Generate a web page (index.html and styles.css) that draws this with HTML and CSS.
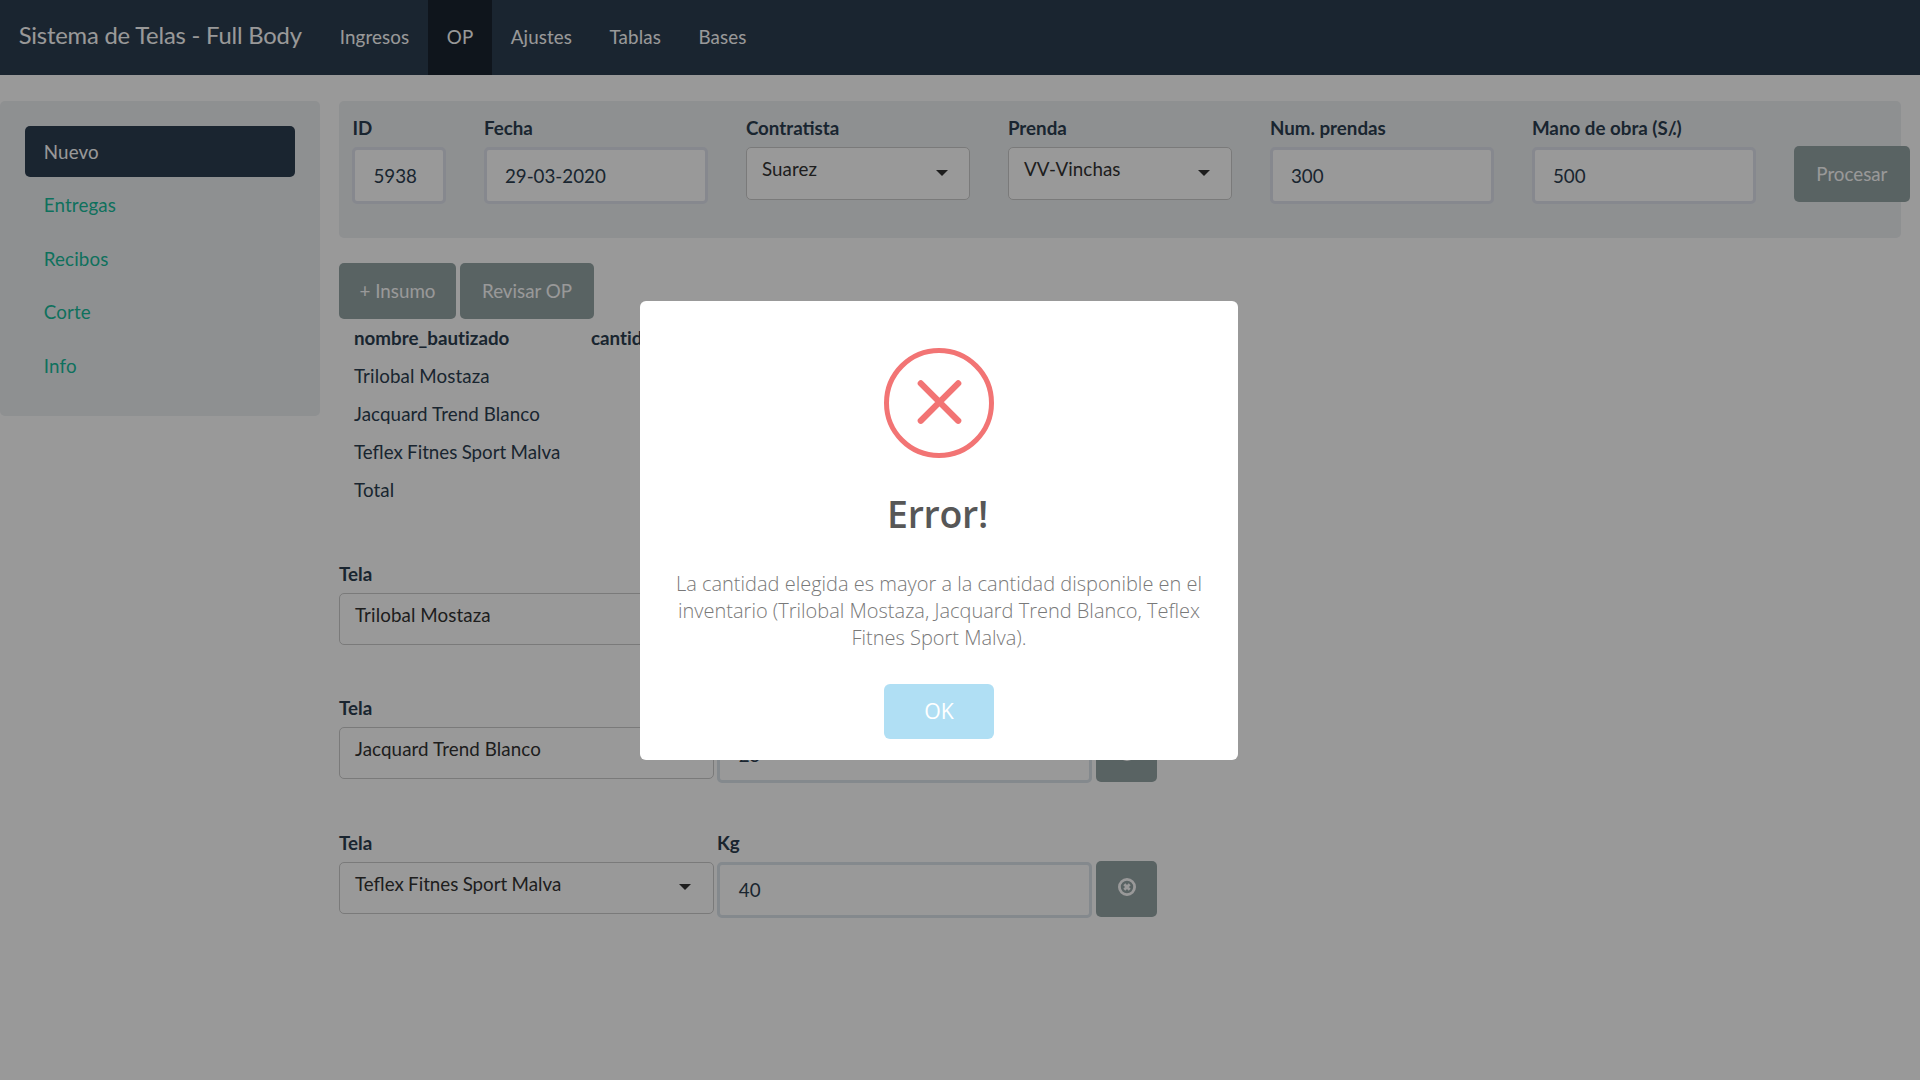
FILE: index.html
```html
<!DOCTYPE html>
<html lang="es">
<head>
<meta charset="utf-8">
<title>Sistema de Telas - Full Body</title>
<link rel="stylesheet" href="styles.css">
</head>
<body>
<header class="navbar">
  <span class="brand">Sistema de Telas - Full Body</span>
  <nav class="nav-links">
    <a>Ingresos</a><a class="active">OP</a><a>Ajustes</a><a>Tablas</a><a>Bases</a>
  </nav>
</header>
<div class="layout">
  <aside class="sidebar">
    <a class="active">Nuevo</a><a>Entregas</a><a>Recibos</a><a>Corte</a><a>Info</a>
  </aside>
  <main class="main">
    <section class="order-form">
      <div class="field"><label>ID</label><div class="input">5938</div></div>
      <div class="field"><label>Fecha</label><div class="input">29-03-2020</div></div>
      <div class="field"><label>Contratista</label><div class="select"><span>Suarez</span><i class="caret"></i></div></div>
      <div class="field"><label>Prenda</label><div class="select"><span>VV-Vinchas</span><i class="caret"></i></div></div>
      <div class="field"><label>Num. prendas</label><div class="input">300</div></div>
      <div class="field"><label>Mano de obra (S<span class="tight">/</span>.)</label><div class="input">500</div></div>
      <button class="btn process">Procesar</button>
    </section>
    <div class="actions"><button class="btn add">+ Insumo</button><button class="btn review">Revisar OP</button></div>
    <table class="summary">
      <thead><tr><th>nombre_bautizado</th><th>cantidad</th></tr></thead>
      <tbody>
        <tr><td>Trilobal Mostaza</td><td></td></tr>
        <tr><td>Jacquard Trend Blanco</td><td></td></tr>
        <tr><td class="snug">Teflex Fitnes Sport Malva</td><td></td></tr>
        <tr><td>Total</td><td></td></tr>
      </tbody>
    </table>
    <section class="fabrics">
      <div class="fabric">
        <div class="field"><label>Tela</label><div class="select"><span>Trilobal Mostaza</span><i class="caret"></i></div></div>
        <div class="field"><label>Kg</label><div class="input"></div></div>
        <button class="btn remove"><svg viewBox="0 0 18 18"><circle cx="9" cy="9" r="7.6"/><path d="M6.3 6.3l5.4 5.4M11.7 6.3l-5.4 5.4"/></svg></button>
      </div>
      <div class="fabric">
        <div class="field"><label>Tela</label><div class="select"><span>Jacquard Trend Blanco</span><i class="caret"></i></div></div>
        <div class="field"><label>Kg</label><div class="input">25</div></div>
        <button class="btn remove"><svg viewBox="0 0 18 18"><circle cx="9" cy="9" r="7.6"/><path d="M6.3 6.3l5.4 5.4M11.7 6.3l-5.4 5.4"/></svg></button>
      </div>
      <div class="fabric">
        <div class="field"><label>Tela</label><div class="select"><span class="snug">Teflex Fitnes Sport Malva</span><i class="caret"></i></div></div>
        <div class="field"><label>Kg</label><div class="input">40</div></div>
        <button class="btn remove"><svg viewBox="0 0 18 18"><circle cx="9" cy="9" r="7.6"/><path d="M6.3 6.3l5.4 5.4M11.7 6.3l-5.4 5.4"/></svg></button>
      </div>
    </section>
  </main>
</div>
<div class="overlay">
  <div class="alert">
    <svg class="alert-icon" viewBox="0 0 110 110"><circle cx="55" cy="55" r="52.5"/><path d="M36.8 35.4l37.4 37.4M74.2 35.4L36.8 72.8"/></svg>
    <h2>Error!</h2>
    <p>La cantidad elegida es mayor a la cantidad disponible en el inventario (Trilobal Mostaza, Jacquard Trend Blanco, Teflex Fitnes Sport Malva).</p>
    <button class="confirm">OK</button>
  </div>
</div>
</body>
</html>
```

FILE: styles.css
```css
* { box-sizing: border-box; }
body {
  margin: 0;
  height: 1080px;
  overflow: hidden;
  background: #fff;
  color: #2c3e50;
  font: 18.75px/26.25px Lato, sans-serif;
}
button { border: 0; font: inherit; }

.navbar { display: flex; height: 75px; background: #2c3e50; color: #fff; }
.brand {
  width: 321px;
  padding: 22px 0 0 18.75px;
  font-size: 23.75px;
  letter-spacing: -0.18px;
  white-space: nowrap;
}
.nav-links { display: flex; letter-spacing: 0.12px; }
.nav-links a { padding: 24.4px 18.75px; }
.nav-links .active { background: #1a242f; }

.layout { display: flex; align-items: flex-start; gap: 19px; padding-top: 26px; }
.sidebar {
  display: flex;
  flex-direction: column;
  gap: 2.6px;
  width: 320px;
  height: 315px;
  padding: 25px;
  border-radius: 5px;
  background: #edf0f2;
  letter-spacing: 0.15px;
}
.sidebar a { height: 51px; padding: 12.5px 18.75px; border-radius: 5px; color: #18bc9c; }
.sidebar .active { background: #2c3e50; color: #fff; }

.main { width: 1562px; }
.order-form {
  display: grid;
  grid-template-columns: 94px repeat(5, 224.5px) 116px;
  column-gap: 37.5px;
  align-items: start;
  height: 137px;
  padding: 13px 0 0 13.4px;
  border-radius: 5px;
  background: #edf0f2;
}
label { display: block; height: 33px; padding-top: 1px; font-weight: 700; white-space: nowrap; }
.tight { letter-spacing: -4.4px; }
.input {
  height: 57px;
  padding: 13px 18px;
  border: 3px solid #dce4ec;
  border-radius: 5px;
  background: #fff;
}
.order-form .input { border-color: #dfe3ed; }
.select {
  display: flex;
  justify-content: space-between;
  height: 52.5px;
  padding: 8px 21px 0 15px;
  border: 1px solid #ccc;
  border-radius: 5px;
  background: #fff;
  color: #333;
  letter-spacing: 0.1px;
}
.caret {
  width: 0;
  height: 0;
  margin-top: 13.5px;
  border: 6.25px solid transparent;
  border-top-color: #333;
  border-bottom: 0;
}
.btn {
  height: 56px;
  padding: 0;
  border-radius: 5px;
  background: #95a5a6;
  color: #fff;
}
.process { width: 116px; margin-top: 32px; }
.actions { display: flex; gap: 4px; margin-top: 25px; }
.add { width: 117px; }
.review { width: 134px; }

.summary { border-collapse: collapse; letter-spacing: 0.1px; }
.summary th, .summary td { height: 38px; padding: 0 15px; text-align: left; white-space: nowrap; }
.summary th { letter-spacing: 0.01px; }
.summary th:first-child { width: 237px; }
.summary .snug, .select .snug { letter-spacing: 0; word-spacing: -0.5px; }

.fabrics { display: grid; gap: 44.4px; margin-top: 51px; }
.fabric { display: grid; grid-template-columns: 375px 375px 62px; column-gap: 3px; height: 90px; }
.fabric .select { height: 52px; padding-right: 22px; }
.fabric .caret { margin-top: 13px; }
.fabric .input { height: 56px; padding: 12px 18.75px; }
.remove { display: grid; place-items: center; height: 56px; margin: 32px 0 0 1px; padding-bottom: 4px; }
.remove svg { width: 18px; height: 18px; fill: none; stroke: #fff; stroke-width: 2.8; }

.overlay {
  position: fixed;
  inset: 0;
  background: rgba(0, 0, 0, 0.4);
}
.alert {
  display: flex;
  flex-direction: column;
  align-items: center;
  width: 598px;
  height: 459px;
  margin: 301px 0 0 640px;
  padding: 47px 21px 0;
  border-radius: 6px;
  background: #fff;
  font-family: "Open Sans", sans-serif;
  text-align: center;
}
.alert-icon { flex: none; width: 110px; height: 110px; fill: none; stroke: #f27474; stroke-width: 5; }
.alert-icon path { stroke-width: 6.25; stroke-linecap: round; }
.alert h2 {
  margin: 31px 0;
  padding-right: 3px;
  color: #575757;
  font-size: 37.5px;
  font-weight: 600;
  line-height: 50px;
  letter-spacing: -0.3px;
}
.alert p { margin: 0; color: #797979; font-size: 20px; font-weight: 300; line-height: 27px; }
.confirm {
  width: 110px;
  height: 55px;
  margin-top: 33px;
  border-radius: 6px;
  background: #b0dff4;
  color: #fff;
  font-size: 21.25px;
}
```
